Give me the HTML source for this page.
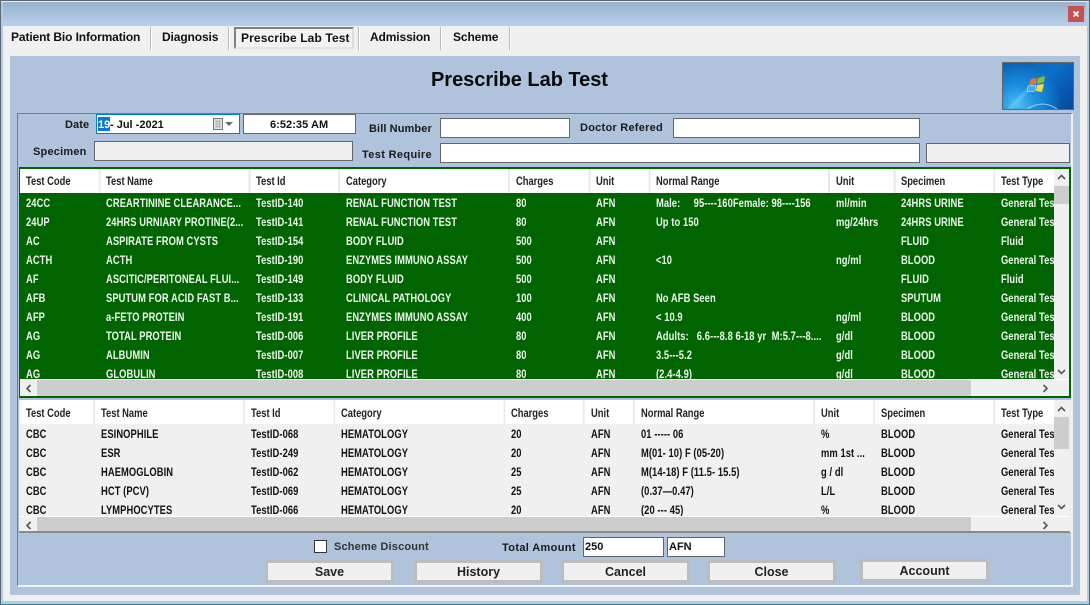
<!DOCTYPE html>
<html><head><meta charset="utf-8"><style>
*{box-sizing:border-box}
html,body{margin:0;padding:0;width:1090px;height:605px;overflow:hidden;background:#f0f0f0}
body{position:relative;font-family:"Liberation Sans",Arial,sans-serif;font-weight:bold;color:#111}
.a{position:absolute}
.t{position:absolute;white-space:pre;line-height:14px}
.lb{font-size:11px;letter-spacing:.1px;color:#1a1a1a}
.tab{font-size:12px;letter-spacing:-.12px;color:#111}
.sep{position:absolute;top:27px;height:23px;width:2px;background:#b9b9b9;border-right:1px solid #fff}
.in{position:absolute;background:#fff;border:1px solid #666}
.dis{background:#f0f0f0}
.btn{position:absolute;width:129px;height:23px;background:#f0f0f0;border:3px solid #bcbcbc;text-align:center;font-size:12.5px;line-height:19px;color:#222}
.box{position:absolute;left:19px;width:1052px;overflow:hidden;background:#f0f0f0}
.tbl{position:absolute;left:1px;top:0;transform:scaleX(.78);transform-origin:0 0;border-collapse:separate;border-spacing:0;table-layout:fixed;font-size:12px}
.tbl td,.tbl th{padding:2px 0 0 7.7px;white-space:pre;overflow:hidden;text-align:left;height:19px;line-height:17px}
.tbl td{letter-spacing:.1px}
.tbl th{padding:0 0 0 7.7px;height:24px;line-height:24px;background:#fff;border-right:2px solid #e9e9e9;color:#222;font-weight:bold}
.w th{padding-top:2px!important;line-height:20px!important}
.clip{position:absolute;left:1px;width:1034px;overflow:hidden}
.g{background:#006400;color:#eef7ee}
.g td{background:#006400}
.w td{background:#f0f0f0;color:#111}
.hb{position:absolute;height:16px;background:#f0f0f0;left:1px;width:1050px}
.hb i{position:absolute;left:17px;top:0;width:934px;height:16px;background:#cdcdcd}
.vb{position:absolute;width:15px;background:#f0f0f0;left:1035px}
.vb i{position:absolute;left:0;width:15px;background:#cdcdcd}
svg{position:absolute;display:block}
</style></head><body>
<!-- window frame -->
<div class="a" style="left:0;top:0;width:1090px;height:605px;background:#f0f0f0;border:1px solid #5b6670;border-bottom:1px solid #2f7f96"></div>
<div class="a" style="left:1px;top:1px;width:1088px;height:1px;background:#e8eef5"></div>
<div class="a" style="left:2px;top:2px;width:1086px;height:24px;background:linear-gradient(#97b1cf,#b9d0ea)"></div>
<div class="a" style="left:1px;top:2px;width:2px;height:602px;background:#b4cbe4"></div>
<div class="a" style="right:1px;top:2px;width:3px;height:602px;background:#b4cbe4"></div>
<div class="a" style="left:1px;bottom:1px;width:1088px;height:3px;background:#b4cbe4"></div>
<div class="a" style="left:3px;top:26px;width:1084px;height:575px;background:#f0f0f0"></div>
<div class="a" style="left:1068px;top:6px;width:16px;height:16px;background:#c75050"></div>
<svg style="left:1068px;top:6px" width="16" height="16"><path d="M5.500 5.500l5 5M10.500 5.500l-5 5" stroke="#fff" stroke-width="1.700"/></svg>
<!-- tabs -->
<span class="t tab" style="left:11px;top:30px">Patient Bio Information</span>
<div class="sep" style="left:150px"></div>
<span class="t tab" style="left:162px;top:30px">Diagnosis</span>
<div class="sep" style="left:228px"></div>
<div class="a" style="left:234px;top:27px;width:120px;height:22px;border:2px solid #808080;border-right-color:#dcdcdc;border-bottom-color:#e4e4e4;background:#f3f3f3"></div>
<span class="t tab" style="left:241px;top:31px;letter-spacing:.12px">Prescribe Lab Test</span>
<div class="sep" style="left:358px"></div>
<span class="t tab" style="left:370px;top:30px">Admission</span>
<div class="sep" style="left:440px"></div>
<span class="t tab" style="left:453px;top:30px">Scheme</span>
<div class="sep" style="left:509px"></div>
<!-- panel -->
<div class="a" style="left:10px;top:56px;width:1070px;height:539px;background:#afc3dc"></div>
<span class="t" style="left:431px;top:69px;font-size:20px;line-height:23px;color:#0a0a0a;letter-spacing:-.03px">Prescribe Lab Test</span>
<!-- picture -->
<div class="a" style="left:1002px;top:62px;width:72px;height:48px;border:1px solid #666;overflow:hidden;background:radial-gradient(ellipse 45px 42px at 14px 42px,#4fc0f0 0%,#1b8fe0 45%,rgba(10,100,190,0) 100%),linear-gradient(135deg,#0a5fb2 0%,#0b6fc9 50%,#06469a 100%)">
<svg style="left:0;top:0" width="70" height="46"><path d="M6 46Q20 32 30 22" stroke="#a8e4fb" stroke-width="4" fill="none" opacity=".25"/><path d="M24 46Q40 36 54 46" stroke="#bfe6f8" stroke-width="1" fill="none" opacity=".75"/>
<path d="M28 16l6-1-1 6-7 1z" fill="#e8703c"/><path d="M35 15l7-2-1 6-7 2z" fill="#86bf3a"/><path d="M25 23l8-1-1 6-8 1z" fill="#4aa8ee" stroke="#dff2fd" stroke-width=".5"/><path d="M34 22l7-1-2 8-6-1z" fill="#f7dc3c"/></svg></div>
<!-- group box -->
<div class="a" style="left:17px;top:113px;width:1056px;height:474px;border:2px solid #7a7a7a;border-right-color:#f2f2f2;border-bottom-color:#f2f2f2;border-top-width:1px;border-left-width:1px"></div>
<!-- form -->
<span class="t lb" style="left:65px;top:118px">Date</span>
<div class="in" style="left:96px;top:114px;width:144px;height:20px;border-color:#0a78d7"></div>
<div class="a" style="left:98px;top:117px;width:12px;height:14px;background:#0a78d7"></div>
<span class="t" style="left:98px;top:118px;font-size:11px;color:#fff">19</span>
<span class="t" style="left:110px;top:118px;font-size:11px;color:#111">- Jul -2021</span>
<svg style="left:213px;top:118px" width="24" height="13"><rect x=".5" y=".5" width="9" height="11" fill="#dfe3e8" stroke="#777"/><path d="M2 3.500h6M2 6h6M2 8.500h6M4 2v8M6.500 2v8" stroke="#a5a9ae" stroke-width=".7"/><path d="M12 4h8l-4 4z" fill="#5a6a80"/></svg>
<div class="in" style="left:243px;top:114px;width:113px;height:20px"></div>
<span class="t" style="left:270px;top:118px;font-size:11px;letter-spacing:.05px">6:52:35 AM</span>
<span class="t lb" style="left:369px;top:122px">Bill Number</span>
<div class="in" style="left:440px;top:118px;width:130px;height:20px"></div>
<span class="t lb" style="left:580px;top:121px;letter-spacing:.25px">Doctor Refered</span>
<div class="in" style="left:673px;top:118px;width:247px;height:20px"></div>
<span class="t lb" style="left:33px;top:145px;letter-spacing:.2px">Specimen</span>
<div class="in dis" style="left:94px;top:141px;width:259px;height:20px"></div>
<span class="t lb" style="left:362px;top:148px;letter-spacing:.35px">Test Require</span>
<div class="in" style="left:440px;top:143px;width:480px;height:20px"></div>
<div class="in dis" style="left:926px;top:143px;width:144px;height:20px"></div>

<!-- green table -->
<div class="box" style="top:167px;height:231px;border:1px solid #006400;border-width:2px 2px 2px 1px;background:#f0f0f0">
<div class="clip" style="top:0;height:210px;background:#006400;left:0">
<table class="tbl g" style="width:1350px;left:0"><colgroup><col style="width:102.6px"><col style="width:192.3px"><col style="width:115.4px"><col style="width:217.9px"><col style="width:102.6px"><col style="width:76.9px"><col style="width:230.8px"><col style="width:83.3px"><col style="width:128.2px"><col style="width:100px"></colgroup>
<tr><th>Test Code</th><th>Test Name</th><th>Test Id</th><th>Category</th><th>Charges</th><th>Unit</th><th>Normal Range</th><th>Unit</th><th>Specimen</th><th>Test Type</th></tr>
<tr><td>24CC</td><td>CREARTININE CLEARANCE...</td><td>TestID-140</td><td>RENAL FUNCTION TEST</td><td>80</td><td>AFN</td><td>Male:     95----160Female: 98----156</td><td>ml/min</td><td>24HRS URINE</td><td>General Test</td></tr>
<tr><td>24UP</td><td>24HRS URNIARY PROTINE(2...</td><td>TestID-141</td><td>RENAL FUNCTION TEST</td><td>80</td><td>AFN</td><td>Up to 150</td><td>mg/24hrs</td><td>24HRS URINE</td><td>General Test</td></tr>
<tr><td>AC</td><td>ASPIRATE FROM CYSTS</td><td>TestID-154</td><td>BODY FLUID</td><td>500</td><td>AFN</td><td></td><td></td><td>FLUID</td><td>Fluid</td></tr>
<tr><td>ACTH</td><td>ACTH</td><td>TestID-190</td><td>ENZYMES IMMUNO ASSAY</td><td>500</td><td>AFN</td><td>&lt;10</td><td>ng/ml</td><td>BLOOD</td><td>General Test</td></tr>
<tr><td>AF</td><td>ASCITIC/PERITONEAL FLUI...</td><td>TestID-149</td><td>BODY FLUID</td><td>500</td><td>AFN</td><td></td><td></td><td>FLUID</td><td>Fluid</td></tr>
<tr><td>AFB</td><td>SPUTUM FOR ACID FAST B...</td><td>TestID-133</td><td>CLINICAL PATHOLOGY</td><td>100</td><td>AFN</td><td>No AFB Seen</td><td></td><td>SPUTUM</td><td>General Test</td></tr>
<tr><td>AFP</td><td>a-FETO PROTEIN</td><td>TestID-191</td><td>ENZYMES IMMUNO ASSAY</td><td>400</td><td>AFN</td><td>&lt; 10.9</td><td>ng/ml</td><td>BLOOD</td><td>General Test</td></tr>
<tr><td>AG</td><td>TOTAL PROTEIN</td><td>TestID-006</td><td>LIVER PROFILE</td><td>80</td><td>AFN</td><td>Adults:   6.6---8.8 6-18 yr  M:5.7---8....</td><td>g/dl</td><td>BLOOD</td><td>General Test</td></tr>
<tr><td>AG</td><td>ALBUMIN</td><td>TestID-007</td><td>LIVER PROFILE</td><td>80</td><td>AFN</td><td>3.5---5.2</td><td>g/dl</td><td>BLOOD</td><td>General Test</td></tr>
<tr><td>AG</td><td>GLOBULIN</td><td>TestID-008</td><td>LIVER PROFILE</td><td>80</td><td>AFN</td><td>(2.4-4.9)</td><td>g/dl</td><td>BLOOD</td><td>General Test</td></tr>
</table></div>
<div class="vb" style="top:0;height:210px;left:1034px"><i style="top:17px;height:18px"></i>
<svg style="left:3px;top:5px" width="9" height="6"><path d="M1 5l3.500-3.500L8 5" stroke="#555" stroke-width="1.600" fill="none"/></svg>
<svg style="left:3px;top:200px" width="9" height="6"><path d="M1 1l3.500 3.500L8 1" stroke="#555" stroke-width="1.600" fill="none"/></svg></div>
<div class="hb" style="top:210px;left:0;border-top:1px solid #fff"><i></i>
<svg style="left:5px;top:4px" width="7" height="9"><path d="M5.500 1L2 4.500 5.500 8" stroke="#555" stroke-width="1.600" fill="none"/></svg>
<svg style="left:1022px;top:4px" width="7" height="9"><path d="M1.500 1L5 4.500 1.500 8" stroke="#555" stroke-width="1.600" fill="none"/></svg></div>
</div>

<!-- second table -->
<div class="box" style="top:400px;height:133px;border-bottom:2px solid #8a8a8a;border-right:2px solid #eee">
<div class="clip" style="top:0;height:116px;left:1px">
<table class="tbl w" style="width:1350px;left:0"><colgroup><col style="width:96.2px"><col style="width:192.3px"><col style="width:115.4px"><col style="width:217.9px"><col style="width:102.6px"><col style="width:64.1px"><col style="width:230.8px"><col style="width:76.9px"><col style="width:153.8px"><col style="width:100px"></colgroup>
<tr><th>Test Code</th><th>Test Name</th><th>Test Id</th><th>Category</th><th>Charges</th><th>Unit</th><th>Normal Range</th><th>Unit</th><th>Specimen</th><th>Test Type</th></tr>
<tr><td>CBC</td><td>ESINOPHILE</td><td>TestID-068</td><td>HEMATOLOGY</td><td>20</td><td>AFN</td><td>01 ----- 06</td><td>%</td><td>BLOOD</td><td>General Test</td></tr>
<tr><td>CBC</td><td>ESR</td><td>TestID-249</td><td>HEMATOLOGY</td><td>20</td><td>AFN</td><td>M(01- 10) F (05-20)</td><td>mm 1st ...</td><td>BLOOD</td><td>General Test</td></tr>
<tr><td>CBC</td><td>HAEMOGLOBIN</td><td>TestID-062</td><td>HEMATOLOGY</td><td>25</td><td>AFN</td><td>M(14-18) F (11.5- 15.5)</td><td>g / dl</td><td>BLOOD</td><td>General Test</td></tr>
<tr><td>CBC</td><td>HCT (PCV)</td><td>TestID-069</td><td>HEMATOLOGY</td><td>25</td><td>AFN</td><td>(0.37—0.47)</td><td>L/L</td><td>BLOOD</td><td>General Test</td></tr>
<tr><td>CBC</td><td>LYMPHOCYTES</td><td>TestID-066</td><td>HEMATOLOGY</td><td>20</td><td>AFN</td><td>(20 --- 45)</td><td>%</td><td>BLOOD</td><td>General Test</td></tr>
</table></div>
<div class="vb" style="top:0;height:116px"><i style="top:17px;height:32px"></i>
<svg style="left:3px;top:6px" width="9" height="6"><path d="M1 5l3.500-3.500L8 5" stroke="#555" stroke-width="1.600" fill="none"/></svg>
<svg style="left:3px;top:104px" width="9" height="6"><path d="M1 1l3.500 3.500L8 1" stroke="#555" stroke-width="1.600" fill="none"/></svg></div>
<div class="hb" style="top:116px;left:0;border-top:1px solid #fff"><i style="left:18px"></i>
<svg style="left:6px;top:4px" width="7" height="9"><path d="M5.500 1L2 4.500 5.500 8" stroke="#555" stroke-width="1.600" fill="none"/></svg>
<svg style="left:1023px;top:4px" width="7" height="9"><path d="M1.500 1L5 4.500 1.500 8" stroke="#555" stroke-width="1.600" fill="none"/></svg></div>
</div>

<!-- bottom -->
<div class="a" style="left:314px;top:540px;width:13px;height:13px;background:#fff;border:1px solid #333"></div>
<span class="t lb" style="left:334px;top:540px;color:#333;letter-spacing:.17px">Scheme Discount</span>
<span class="t lb" style="left:502px;top:541px;letter-spacing:.35px">Total Amount</span>
<div class="in" style="left:583px;top:537px;width:81px;height:20px"></div>
<span class="t" style="left:585px;top:540px;font-size:11px">250</span>
<div class="in" style="left:667px;top:537px;width:58px;height:20px"></div>
<span class="t" style="left:669px;top:540px;font-size:11px">AFN</span>
<div class="btn" style="left:265px;top:560px">Save</div>
<div class="btn" style="left:414px;top:560px">History</div>
<div class="btn" style="left:561px;top:560px">Cancel</div>
<div class="btn" style="left:707px;top:560px">Close</div>
<div class="btn" style="left:860px;top:559px">Account</div>
</body></html>
